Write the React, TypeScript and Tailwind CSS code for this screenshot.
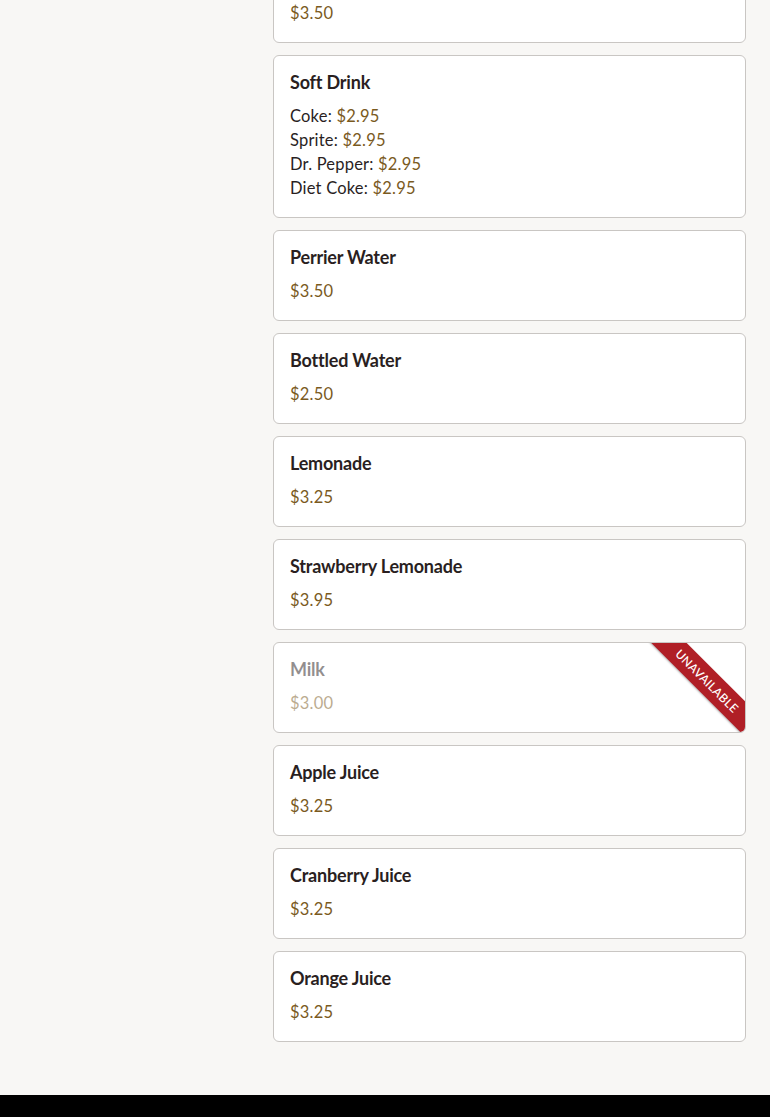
import React from "react";

type Item = { name: string; price?: string; options?: { label: string; price: string }[]; unavailable?: boolean };

const items: Item[] = [
  { name: "Iced Tea", price: "$3.50" },
  {
    name: "Soft Drink",
    options: [
      { label: "Coke", price: "$2.95" },
      { label: "Sprite", price: "$2.95" },
      { label: "Dr. Pepper", price: "$2.95" },
      { label: "Diet Coke", price: "$2.95" },
    ],
  },
  { name: "Perrier Water", price: "$3.50" },
  { name: "Bottled Water", price: "$2.50" },
  { name: "Lemonade", price: "$3.25" },
  { name: "Strawberry Lemonade", price: "$3.95" },
  { name: "Milk", price: "$3.00", unavailable: true },
  { name: "Apple Juice", price: "$3.25" },
  { name: "Cranberry Juice", price: "$3.25" },
  { name: "Orange Juice", price: "$3.25" },
];

function Card({ item }: { item: Item }) {
  return (
    <div className="relative overflow-hidden rounded-[6px] border border-[#c9c6c3] bg-white px-4 pt-[15px] pb-[17px]">
      <div className={item.unavailable ? "opacity-50" : ""}>
        <div className="text-[18px] leading-[22px] font-bold text-[#2a1f1f] tracking-[-0.2px]">{item.name}</div>
        <div className="mt-[11px] text-[16.5px] leading-[24px] tracking-[0.2px]">
          {item.price && <div className="text-[#7a5a1e]">{item.price}</div>}
          {item.options &&
            item.options.map((o) => (
              <div key={o.label} className="text-[#2a1f1f]">
                {o.label}: <span className="text-[#7a5a1e]">{o.price}</span>
              </div>
            ))}
        </div>
      </div>
      {item.unavailable && (
        <div className="absolute top-[38px] right-[38px] flex h-[25px] w-[150px] translate-x-1/2 -translate-y-1/2 rotate-45 items-center justify-center bg-[#b01f26] text-[12px] font-medium uppercase tracking-[0.3px] text-white shadow-[0_1px_2px_rgba(0,0,0,0.3)]">
          Unavailable
        </div>
      )}
    </div>
  );
}

export default function App() {
  return (
    <div className="h-[1117px] bg-[#f8f7f5] overflow-hidden" style={{ fontFamily: "Lato, 'Noto Sans', sans-serif" }}>
      <div className="flex pl-[273px] pr-[24px] pb-[53px]">
        <div className="-mt-[48px] flex w-full flex-col gap-3">
          {items.map((it) => (
            <Card key={it.name} item={it} />
          ))}
        </div>
      </div>
      <footer className="h-[200px] bg-black" />
    </div>
  );
}
